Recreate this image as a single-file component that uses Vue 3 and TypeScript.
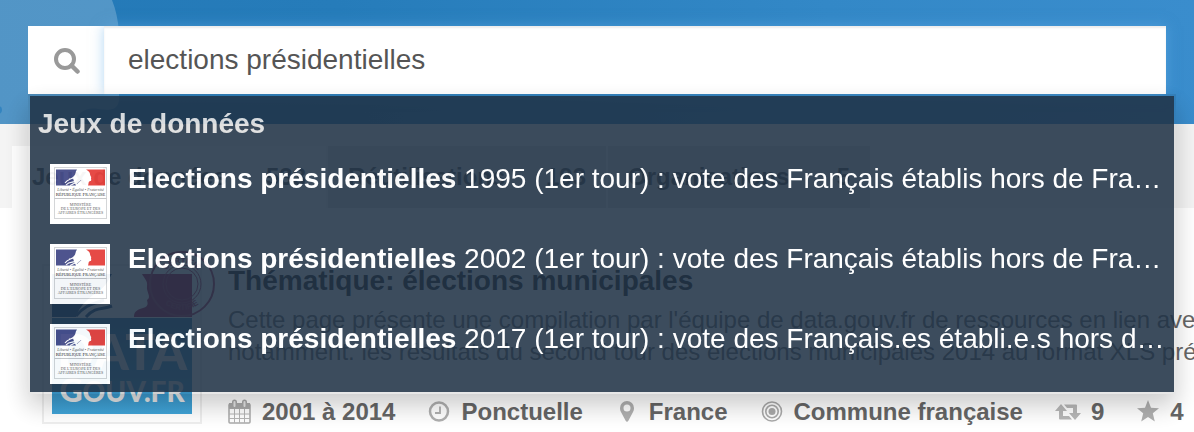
<script setup lang="ts">
import { ref } from 'vue'

interface Suggestion {
  match: string
  rest: string
}

const query = ref<string>('elections présidentielles')

const suggestions: Suggestion[] = [
  { match: 'Elections présidentielles', rest: ' 1995 (1er tour) : vote des Français établis hors de Fra…' },
  { match: 'Elections présidentielles', rest: ' 2002 (1er tour) : vote des Français établis hors de Fra…' },
  { match: 'Elections présidentielles', rest: ' 2017 (1er tour) : vote des Français.es établi.e.s hors d…' },
]
</script>

<template>
  <div class="page">
    <header class="banner">
      <svg class="bubble" viewBox="0 0 130 124" aria-hidden="true">
        <path d="M0 0H112C116 10 118 20 119 32V100C118 110 110 111 98 109C86 107 78 112 74 124H0Z" fill="#fff" fill-opacity=".21" />
        <circle cx="-2" cy="110" r="4" fill="#3384c0" />
      </svg>
      <form class="search" role="search" @submit.prevent>
        <div class="field">
          <button class="submit" type="submit" aria-label="Rechercher">
            <svg width="28" height="28" viewBox="0 0 28 28" fill="none" stroke="#999" aria-hidden="true">
              <circle cx="13" cy="13" r="9" stroke-width="4" />
              <path d="M19.500 19.500L25.500 25.500" stroke-width="4.500" stroke-linecap="round" />
            </svg>
          </button>
          <input v-model="query" class="query" type="text" aria-label="Recherche" />
        </div>
        <div class="menu">
          <h2 class="group">Jeux de données</h2>
          <a v-for="s in suggestions" :key="s.rest" class="option" href="#">
            <svg class="thumb" viewBox="0 0 60 60" aria-hidden="true">
              <rect width="60" height="60" fill="#fff" />
              <rect x="4.500" y="3.500" width="52" height="51" fill="none" stroke="#d2d4d6" />
              <path d="M6 5.500H27C25 8 26 10 24 12C22 14 24 17 26 21.500H6Z" fill="#454b88" />
              <path d="M36 5.500H55V21.500H38C39 19 38 18 40 17C42 17 41 15 41 14C42 13 40 12 40 10C40 8 38 7 36 5.500Z" fill="#e5413d" />
              <path d="M15 19C18 15 20 16 24 13M16 21C20 16 24 20 27 16M20 21.500L27 18M19 15L24 14" stroke="#fff" stroke-width="1.200" fill="none" />
              <path d="M27 20C29 17 30 18 31 16" stroke="#6b70a0" stroke-width=".6" fill="none" />
              <text x="30.500" y="27" class="motto">Liberté • Égalité • Fraternité</text>
              <text x="30.500" y="32" class="state">République Française</text>
              <path d="M4.500 34.500H56.500" stroke="#c2c4c8" />
              <text x="30.500" y="42" class="ministry">MINISTÈRE</text>
              <text x="30.500" y="46" class="ministry">DE L'EUROPE ET DES</text>
              <text x="30.500" y="50" class="ministry">AFFAIRES ÉTRANGÈRES</text>
            </svg>
            <span class="label"><strong>{{ s.match }}</strong>{{ s.rest }}</span>
          </a>
        </div>
      </form>
    </header>

    <nav class="tabs" aria-label="Résultats">
      <a class="tab active" href="#">Jeux de données <span>533</span></a>
      <a class="tab" href="#">Réutilisations <span>193</span></a>
      <a class="tab" href="#">Organisations <span>5</span></a>
    </nav>

    <article class="result">
      <div class="logo">
        <svg class="picture" viewBox="0 0 140 140" aria-hidden="true">
          <rect width="140" height="140" fill="#fff" />
          <path d="M0 0H60C56 6 55 12 44 19C34 26 28 32 24 43H0Z" fill="#174a80" />
          <path d="M90 0H140V43H82C82 38 84 36 91 34C98 32 95 28 95 26C100 23 94 18 95 12C96 7 92 4 90 0Z" fill="#a3174a" />
          <path d="M24 42C34 30 42 30 52 26M34 43C44 32 50 36 60 32" stroke="#174a80" stroke-width="3" fill="none" />
          <defs>
            <linearGradient id="sky" x1="0" y1="0" x2="0" y2="1">
              <stop offset="0" stop-color="#2b78ad" />
              <stop offset="1" stop-color="#40a4d8" />
            </linearGradient>
          </defs>
          <rect y="44" width="140" height="96" fill="url(#sky)" />
          <text x="70" y="96" class="brand big">DATA</text>
          <text x="70" y="128" class="brand"><tspan class="initial">G</tspan>OUV.FR</text>
        </svg>
        <svg class="seal" viewBox="0 0 68 68" aria-hidden="true">
          <defs><path id="ring" d="M8 34A26 26 0 0 0 60 34" /><path id="arc" d="M13 34A21 21 0 0 1 55 34" /></defs>
          <g fill="none" stroke="#b0305c"><circle cx="34" cy="34" r="32" stroke-width="2" /><circle cx="34" cy="34" r="19" /><circle cx="34" cy="34" r="16" /></g>
          <text class="stamp"><textPath href="#ring" startOffset="50%">CERTIFIÉ</textPath></text>
          <text class="stamp"><textPath href="#arc" startOffset="50%">CERTIFIÉ</textPath></text>
        </svg>
      </div>
      <div class="body">
        <h3 class="title">Thématique: élections municipales</h3>
        <p class="text">Cette page présente une compilation par l'équipe de data.gouv.fr de ressources en lien avec<br />notamment. les résultats du second tour des élections municipales 2014 au format XLS pré</p>
        <ul class="meta">
          <li>
            <svg width="24" height="26" viewBox="0 0 24 26" aria-hidden="true">
              <path d="M2 5H21Q22 5 22 6V23Q22 24 21 24H2Q1 24 1 23V6Q1 5 2 5Z" fill="none" stroke="#aaa" stroke-width="1.500" />
              <path d="M1 4H22V10H1Z" fill="#aaa" />
              <path d="M6.500 10V24M11.500 10V24M16.500 10V24M1 15H22M1 19.500H22" stroke="#b4b4b4" />
              <path d="M6.500 3V7M16.500 3V7" stroke="#aaa" stroke-width="5" stroke-linecap="round" />
              <path d="M6.500 3V7M16.500 3V7" stroke="#e8e8e8" stroke-width="2" stroke-linecap="round" />
            </svg>
            2001 à 2014
          </li>
          <li>
            <svg width="24" height="26" viewBox="0 0 24 26" fill="none" stroke="#b0b0b0" aria-hidden="true">
              <circle cx="12" cy="12.500" r="9" stroke-width="2.500" /><path d="M13 7.500V14H8" stroke-width="1.800" />
            </svg>
            Ponctuelle
          </li>
          <li>
            <svg width="24" height="26" viewBox="0 0 24 26" fill="#b0b0b0" aria-hidden="true">
              <path fill-rule="evenodd" d="M12 2A7 7 0 0 1 19 9C19 11 18.500 12 18 13L13.500 21.500Q12 24 10.500 21.500L6 13C5.500 12 5 11 5 9A7 7 0 0 1 12 2ZM12 5.500A3.500 3.500 0 1 0 12 12.500A3.500 3.500 0 1 0 12 5.500Z" />
            </svg>
            France
          </li>
          <li>
            <svg width="24" height="26" viewBox="0 0 24 26" fill="none" stroke="#aaa" stroke-width="1.600" aria-hidden="true">
              <circle cx="12" cy="12.500" r="9.500" /><circle cx="12" cy="12.500" r="6.200" /><circle cx="12" cy="12.500" r="3.500" fill="#aaa" stroke="none" />
            </svg>
            Commune française
          </li>
          <li>
            <svg width="26" height="26" viewBox="0 0 26 26" fill="#b8b8b8" aria-hidden="true">
              <path d="M6 5L12 12H8V17H14L17 20.500H5Q4 20.500 4 19.500V12H0ZM20 21L14 14H18V9H12L9 5.500H21Q22 5.500 22 6.500V14H26Z" />
            </svg>
            9
          </li>
          <li>
            <svg width="24" height="26" viewBox="0 0 24 26" fill="#b0b0b0" aria-hidden="true">
              <path d="M12 1L15 8.700L23 9.200L16.800 14.300L18.800 22.500L12 18L5.200 22.500L7.200 14.300L1 9.200L9 8.700Z" />
            </svg>
            4
          </li>
        </ul>
      </div>
    </article>
  </div>
</template>

<style>
body {
  margin: 0;
  overflow: hidden;
  background: #fff;
}
</style>

<style scoped>
.page {
  font-family: "Liberation Sans", Arial, sans-serif;
  color: #666;
}
.banner {
  position: relative;
  padding: 26px 28px 30px;
  background: linear-gradient(75deg, #2479b7 0%, #267cba 30%, #3388c7 70%, #3a8dcd 100%);
}
.bubble {
  position: absolute;
  left: 0;
  top: 0;
  width: 130px;
  height: 124px;
}
.search {
  position: relative;
  z-index: 2;
}
.field {
  display: flex;
  height: 68px;
}
.submit {
  display: flex;
  align-items: center;
  justify-content: center;
  width: 76px;
  padding: 0;
  border: 0;
  background: #fff;
}
.query {
  flex: 1;
  min-width: 0;
  padding: 0 24px;
  border: 0;
  outline: 0;
  background: #fff;
  box-shadow: inset 0 2px 2px rgba(0, 0, 0, 0.075), 0 0 12px rgba(102, 175, 233, 0.5);
  color: #555;
  font: 28px "Liberation Sans", Arial, sans-serif;
}
.menu {
  position: absolute;
  top: 100%;
  left: 0;
  right: -10px;
  padding-bottom: 8px;
  border: 2px solid rgba(0, 0, 0, 0.1);
  background: rgba(33, 51, 71, 0.92);
  background-clip: padding-box;
  box-shadow: 0 12px 24px rgba(0, 0, 0, 0.22);
  opacity: 0.95;
}
.group {
  margin: 0;
  padding: 8px 8px 0;
  color: #e0e0e0;
  font-size: 28px;
  line-height: 40px;
}
.option {
  display: flex;
  gap: 18px;
  padding: 20px 4px 0 20px;
  color: #fff;
  font-size: 28px;
  line-height: 30px;
  text-decoration: none;
}
.thumb {
  flex: none;
  width: 60px;
  height: 60px;
}
.label {
  min-width: 0;
  overflow: hidden;
  white-space: nowrap;
  text-overflow: ellipsis;
}
.motto,
.state,
.ministry {
  font-family: "Liberation Serif", serif;
  text-anchor: middle;
  fill: #555;
}
.motto {
  font-size: 4px;
  font-style: italic;
}
.state {
  fill: #222;
  font-size: 5px;
  font-variant: small-caps;
}
.ministry {
  font-size: 4px;
}
.tabs {
  display: flex;
  gap: 2px;
  padding: 22px 12px 0;
  background: #f4f4f4;
}
.tab {
  display: flex;
  justify-content: space-between;
  box-sizing: border-box;
  min-width: 262px;
  padding: 0 20px;
  background: #dcdcdc;
  color: #555;
  font-size: 24px;
  font-weight: 700;
  line-height: 62px;
  text-decoration: none;
}
.tab:nth-child(2) {
  min-width: 278px;
}
.tab.active {
  min-width: 314px;
  background: #fff;
}
.result {
  display: flex;
  gap: 26px;
  padding: 56px 0 8px 42px;
}
.logo {
  position: relative;
  flex: none;
  box-sizing: border-box;
  width: 160px;
  height: 160px;
  padding: 8px;
  border: 2px solid #eee;
}
.picture {
  display: block;
  width: 140px;
  height: 140px;
}
.seal {
  position: absolute;
  top: -16px;
  right: -16px;
  width: 68px;
  height: 68px;
}
.brand {
  fill: #e4e6e7;
  font: 900 28px Lato, sans-serif;
  text-anchor: middle;
}
.brand.big {
  font-size: 50px;
}
.initial {
  font-size: 32px;
}
.stamp {
  fill: #b0305c;
  font: 700 8px "Liberation Sans", sans-serif;
  text-anchor: middle;
}
.body {
  flex: 1;
  min-width: 0;
  overflow: hidden;
}
.title {
  margin: 0;
  color: #222;
  font-size: 28px;
  line-height: 34px;
}
.text {
  margin: 6px 0 24px;
  font-size: 24px;
  line-height: 32px;
  white-space: nowrap;
}
.meta {
  display: flex;
  gap: 32px;
  margin: 0;
  padding: 0;
  list-style: none;
  font-size: 24px;
  font-weight: 700;
  line-height: 40px;
  white-space: nowrap;
}
.meta li {
  display: flex;
  align-items: center;
  gap: 10px;
}
.meta svg {
  flex: none;
}
</style>
